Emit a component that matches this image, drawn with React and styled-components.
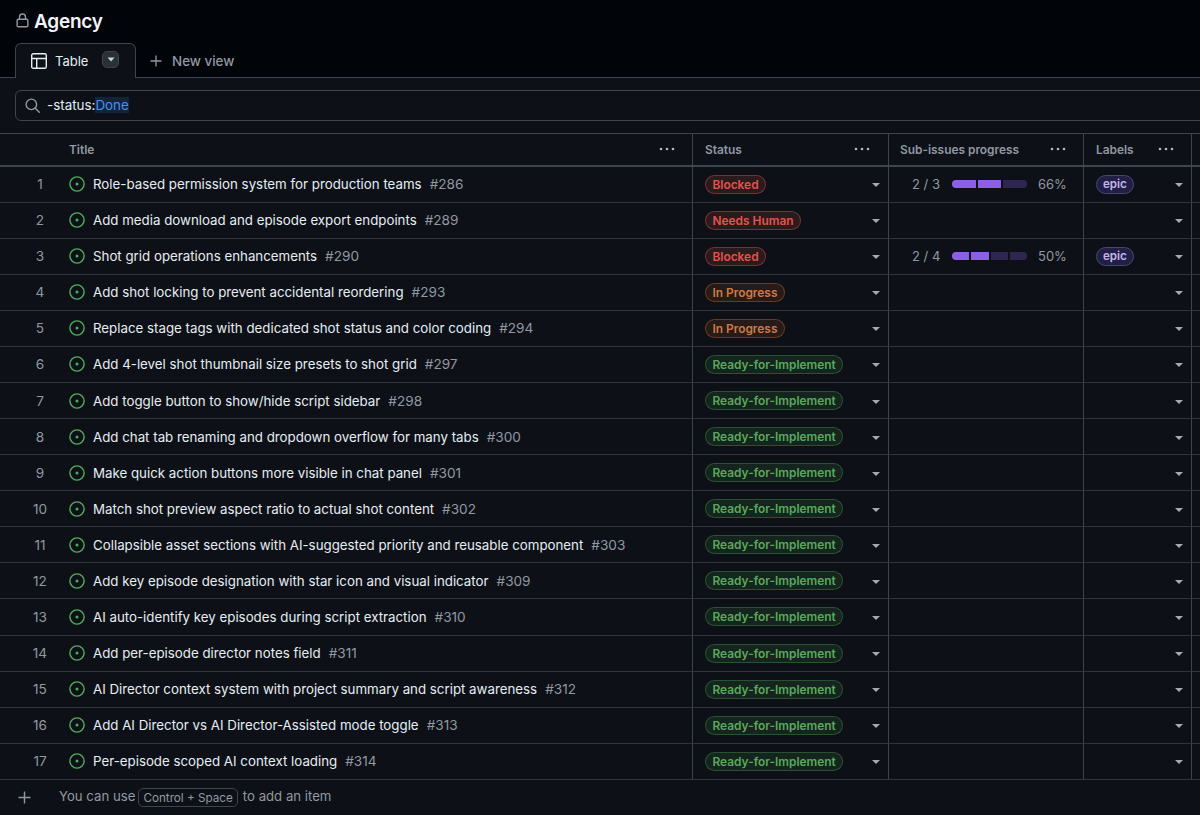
import React from "react";
import styled, { createGlobalStyle } from "styled-components";

const Global = createGlobalStyle`
  html, body { margin: 0; padding: 0; background: #010409; }
  body { font-family: Inter, "Liberation Sans", sans-serif; color: #f0f6fc; overflow: hidden; }
  #root { width: 1200px; height: 815px; overflow: hidden; }
`;

const Page = styled.div`
  width: 1200px;
  height: 815px;
  display: flex;
  flex-direction: column;
  overflow: hidden;
`;
const Header = styled.header`
  height: 43px;
  display: flex;
  align-items: center;
  gap: 5px;
  padding: 0 0 1px 16px;
  box-sizing: border-box;
`;
const LockSvg = styled.svg`
  margin-top: -2px;
`;
const ProjectTitle = styled.h1`
  margin: 0;
  font-size: 19px;
  font-weight: 600;
  letter-spacing: -0.25px;
  color: #f0f6fc;
`;
const TabBar = styled.nav`
  height: 34px;
  display: flex;
  align-items: flex-end;
  padding-left: 15px;
  border-bottom: 1px solid #3d444d;
  box-sizing: content-box;
`;
const ActiveTab = styled.div`
  width: 121px;
  height: 35px;
  margin-bottom: -1px;
  box-sizing: border-box;
  border: 1px solid #3d444d;
  border-bottom: 0;
  border-radius: 6px 6px 0 0;
  background: #0d1117;
  display: flex;
  align-items: center;
  padding-left: 15px;
  font-size: 13px;
  color: #e6edf3;
`;
const TabLabel = styled.span`
  margin-left: 8px;
`;
const TabCaret = styled.span`
  width: 17px;
  height: 17px;
  margin-left: 14px;
  margin-top: -3px;
  border-radius: 5px;
  background: #2a2f38;
  border: 1px solid #3d444d;
  box-sizing: border-box;
  display: flex;
  align-items: center;
  justify-content: center;
`;
const NewView = styled.div`
  height: 34px;
  padding-top: 2px;
  box-sizing: border-box;
  display: flex;
  align-items: center;
  gap: 10px;
  margin-left: 14px;
  font-size: 13.4px;
  font-weight: 500;
  color: #9198a1;
`;
const Content = styled.main`
  flex: 1;
  min-height: 0;
  background: #0d1117;
  display: flex;
  flex-direction: column;
`;
const SearchRow = styled.div`
  padding: 12px 0 12px 15px;
`;
const SearchBox = styled.div`
  width: 1210px;
  height: 31px;
  box-sizing: border-box;
  border: 1px solid #3d444d;
  border-radius: 6px;
  display: flex;
  align-items: center;
  padding: 0 0 1px 9px;
  gap: 7px;
  font-size: 13.4px;
  color: #e6edf3;
`;
const Query = styled.span`
  display: inline-block;
`;
const QueryValue = styled.span`
  color: #4493f8;
  background: rgba(56, 139, 253, 0.15);
`;
const Table = styled.div`
  flex: 1;
  min-height: 0;
  border-top: 1px solid #3d444d;
  display: flex;
  flex-direction: column;
`;
const HeadRow = styled.div`
  height: 30.5px;
  flex: none;
  display: grid;
  grid-template-columns: 693px 196px 195px 108px 8px;
  border-bottom: 2px solid #3d444d;
  box-sizing: content-box;
`;
const HeadCell = styled.div`
  display: flex;
  align-items: center;
  justify-content: space-between;
  border-right: 1px solid #3d444d;
  box-sizing: border-box;
  padding: 0 ${(p) => p.$right}px 0 ${(p) => p.$left}px;
  font-size: 11.9px;
  font-weight: 600;
  color: #9198a1;
  &:last-child { border-right: 0; }
`;
const Body = styled.div`
  display: flex;
  flex-direction: column;
`;
const Row = styled.div`
  height: 36.09px;
  flex: none;
  display: grid;
  grid-template-columns: 693px 196px 195px 108px 8px;
  box-sizing: border-box;
  border-bottom: 1px solid #30363d;
`;
const Cell = styled.div`
  display: flex;
  align-items: center;
  min-width: 0;
  box-sizing: border-box;
  border-right: 1px solid #3d444d;
  position: relative;
  &:last-child { border-right: 0; }
`;
const TitleCell = styled(Cell)`
  padding-right: 10px;
`;
const RowNum = styled.span`
  width: 69px;
  padding-left: 11px;
  flex: none;
  text-align: center;
  font-size: 13.6px;
  color: #9198a1;
  box-sizing: border-box;
`;
const IssueTitle = styled.span`
  margin-left: 8px;
  font-size: 13.3px;
  color: #e6edf3;
  white-space: nowrap;
`;
const IssueNum = styled.span`
  margin-left: 8px;
  font-size: 13.6px;
  color: #9198a1;
`;
const StatusCell = styled(Cell)`
  padding-left: 12px;
`;
const tones = {
  red: { fg: "#e5534b", bg: "rgba(229,83,75,0.14)", bd: "rgba(229,83,75,0.42)" },
  orange: { fg: "#cf7a42", bg: "rgba(219,109,40,0.12)", bd: "rgba(219,109,40,0.38)" },
  green: { fg: "#57ab5a", bg: "rgba(70,149,74,0.15)", bd: "rgba(70,149,74,0.42)" },
};
const Pill = styled.span`
  height: 19px;
  box-sizing: border-box;
  display: inline-flex;
  align-items: center;
  padding: 0 6.5px;
  border-radius: 10px;
  font-size: 11.9px;
  font-weight: 600;
  white-space: nowrap;
  color: ${(p) => tones[p.$tone].fg};
  background: ${(p) => tones[p.$tone].bg};
  border: 1px solid ${(p) => tones[p.$tone].bd};
`;
const Caret = styled.span`
  position: absolute;
  top: 50%;
  right: ${(p) => p.$right}px;
  margin-top: -1px;
  width: 0;
  height: 0;
  border-left: 4px solid transparent;
  border-right: 4px solid transparent;
  border-top: 4px solid #a3aab2;
`;
const ProgressCell = styled(Cell)`
  padding-left: 23px;
  font-size: 13px;
  color: #9198a1;
`;
const Count = styled.span`
  width: 40px;
  flex: none;
  white-space: nowrap;
`;
const Bar = styled.div`
  width: 75px;
  height: 8px;
  display: flex;
  gap: 2px;
  border-radius: 4px;
  overflow: hidden;
`;
const Segment = styled.span`
  flex: 1;
  background: ${(p) => (p.$on ? "#8b5fe6" : "#2f2650")};
`;
const Percent = styled.span`
  margin-left: 11px;
`;
const LabelCell = styled(Cell)`
  padding-left: 12px;
`;
const LabelPill = styled.span`
  height: 19px;
  padding: 0 6px;
  box-sizing: border-box;
  display: inline-flex;
  align-items: center;
  border-radius: 10px;
  font-size: 11.6px;
  font-weight: 600;
  color: #c3b6ee;
  background: #221f45;
  border: 1px solid #4a4670;
`;
const Footer = styled.div`
  flex: 1;
  display: flex;
  align-items: center;
  padding: 1px 0 0 18px;
  font-size: 13.2px;
  color: #9198a1;
`;
const Hint = styled.span`
  margin-left: 28px;
`;
const Kbd = styled.kbd`
  display: inline-block;
  margin: 0 5px 0 3px;
  height: 19px;
  line-height: 18px;
  padding: 0 4px;
  box-sizing: border-box;
  border: 1px solid #3d444d;
  border-radius: 5px;
  font-family: inherit;
  font-size: 11.7px;
  vertical-align: -1px;
`;

const LockIcon = () => (
  <LockSvg width="13" height="15" viewBox="0 0 14 16" fill="none" stroke="#9198a1" strokeWidth="1.5">
    <rect x="1.2" y="6.7" width="11.6" height="8" rx="1.4" />
    <path d="M3.8 6.7V4.2a3.2 3.2 0 0 1 6.4 0v2.5" />
  </LockSvg>
);
const TableIcon = () => (
  <svg width="16" height="16" viewBox="0 0 16 16" fill="none" stroke="#e6edf3" strokeWidth="1.4">
    <rect x="0.7" y="0.7" width="14.6" height="14.6" rx="1.6" />
    <path d="M0.7 5.5h14.6M5.7 5.5v9.8" />
  </svg>
);
const SmallCaret = () => (
  <svg width="8" height="5" viewBox="0 0 8 5"><path d="M0.5 0.5h7L4 4.5z" fill="#c9d1d9" /></svg>
);
const PlusIcon = ({ color = "#9198a1", size = 12 }) => (
  <svg width={size} height={size} viewBox="0 0 12 12" stroke={color} strokeWidth="1.3" fill="none">
    <path d="M6 0.5v11M0.5 6h11" />
  </svg>
);
const SearchIcon = () => (
  <svg width="15" height="15" viewBox="0 0 16 16" fill="none" stroke="#9198a1" strokeWidth="1.5">
    <circle cx="6.8" cy="6.8" r="5.6" />
    <path d="M11 11l4.2 4.2" strokeLinecap="round" />
  </svg>
);
const Dots = () => (
  <svg width="16" height="4" viewBox="0 0 16 4" fill="#b1b7be">
    <circle cx="2" cy="2" r="1.3" /><circle cx="8" cy="2" r="1.3" /><circle cx="14" cy="2" r="1.3" />
  </svg>
);
const OpenIcon = () => (
  <svg width="16" height="16" viewBox="0 0 16 16" fill="none" style={{ flex: "none" }}>
    <circle cx="8" cy="8" r="7.1" stroke="#4fae5b" strokeWidth="1.4" />
    <circle cx="8" cy="8" r="1.5" fill="#4fae5b" />
  </svg>
);

const R = "Ready-for-Implement";
const rows = [
  ["Role-based permission system for production teams", 286, "Blocked", "red", [2, 3, "66%"]],
  ["Add media download and episode export endpoints", 289, "Needs Human", "red"],
  ["Shot grid operations enhancements", 290, "Blocked", "red", [2, 4, "50%"]],
  ["Add shot locking to prevent accidental reordering", 293, "In Progress", "orange"],
  ["Replace stage tags with dedicated shot status and color coding", 294, "In Progress", "orange"],
  ["Add 4-level shot thumbnail size presets to shot grid", 297, R, "green"],
  ["Add toggle button to show/hide script sidebar", 298, R, "green"],
  ["Add chat tab renaming and dropdown overflow for many tabs", 300, R, "green"],
  ["Make quick action buttons more visible in chat panel", 301, R, "green"],
  ["Match shot preview aspect ratio to actual shot content", 302, R, "green"],
  ["Collapsible asset sections with AI-suggested priority and reusable component", 303, R, "green"],
  ["Add key episode designation with star icon and visual indicator", 309, R, "green"],
  ["AI auto-identify key episodes during script extraction", 310, R, "green"],
  ["Add per-episode director notes field", 311, R, "green"],
  ["AI Director context system with project summary and script awareness", 312, R, "green"],
  ["Add AI Director vs AI Director-Assisted mode toggle", 313, R, "green"],
  ["Per-episode scoped AI context loading", 314, R, "green"],
];

export default function App() {
  return (
    <Page>
      <Global />
      <Header>
        <LockIcon />
        <ProjectTitle>Agency</ProjectTitle>
      </Header>
      <TabBar>
        <ActiveTab>
          <TableIcon />
          <TabLabel>Table</TabLabel>
          <TabCaret><SmallCaret /></TabCaret>
        </ActiveTab>
        <NewView><PlusIcon />New view</NewView>
      </TabBar>
      <Content>
        <SearchRow>
          <SearchBox>
            <SearchIcon />
            <Query>-status:<QueryValue>Done</QueryValue></Query>
          </SearchBox>
        </SearchRow>
        <Table>
          <HeadRow>
            <HeadCell $left={69} $right={17}><span>Title</span><Dots /></HeadCell>
            <HeadCell $left={12} $right={18}><span>Status</span><Dots /></HeadCell>
            <HeadCell $left={11} $right={17}><span>Sub-issues progress</span><Dots /></HeadCell>
            <HeadCell $left={12} $right={17}><span>Labels</span><Dots /></HeadCell>
            <HeadCell $left={0} $right={0} />
          </HeadRow>
          <Body>
            {rows.map(([title, num, status, tone, progress], i) => (
              <Row key={num}>
                <TitleCell>
                  <RowNum>{i + 1}</RowNum>
                  <OpenIcon />
                  <IssueTitle>{title}</IssueTitle>
                  <IssueNum>#{num}</IssueNum>
                </TitleCell>
                <StatusCell>
                  <Pill $tone={tone}>{status}</Pill>
                  <Caret $right={8} />
                </StatusCell>
                <ProgressCell>
                  {progress && (
                    <>
                      <Count>{progress[0]} / {progress[1]}</Count>
                      <Bar>
                        {Array.from({ length: progress[1] }, (_, k) => (
                          <Segment key={k} $on={k < progress[0]} />
                        ))}
                      </Bar>
                      <Percent>{progress[2]}</Percent>
                    </>
                  )}
                </ProgressCell>
                <LabelCell>
                  {progress && <LabelPill>epic</LabelPill>}
                  <Caret $right={8} />
                </LabelCell>
                <Cell />
              </Row>
            ))}
          </Body>
          <Footer>
            <PlusIcon size={13} />
            <Hint>You can use<Kbd>Control + Space</Kbd>to add an item</Hint>
          </Footer>
        </Table>
      </Content>
    </Page>
  );
}
